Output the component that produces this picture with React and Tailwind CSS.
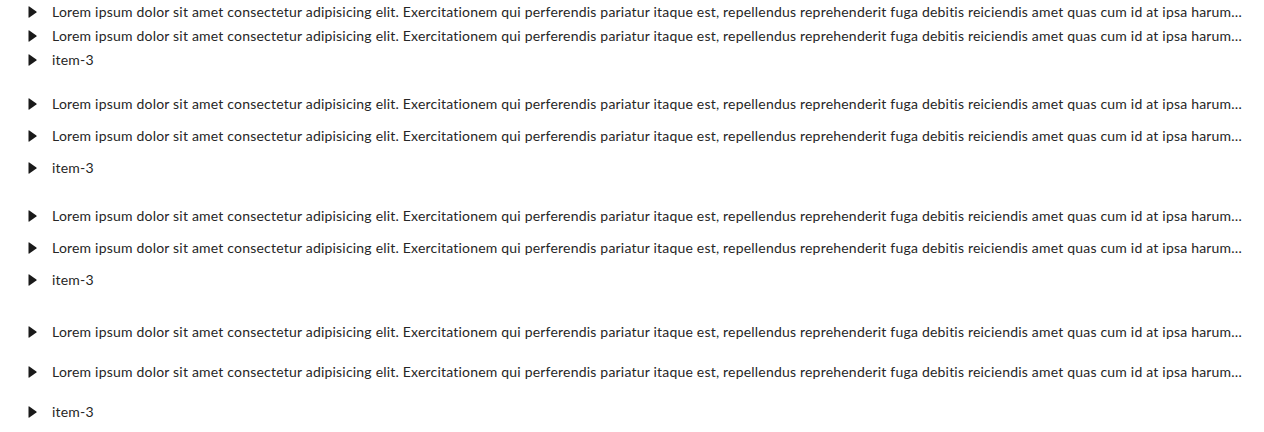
import React from "react";

const LONG =
  "Lorem ipsum dolor sit amet consectetur adipisicing elit. Exercitationem qui perferendis pariatur itaque est, repellendus reprehenderit fuga debitis reiciendis amet quas cum id at ipsa harum\u2003magnam voluptatibus.";

function Caret() {
  return (
    <svg width="9" height="12" viewBox="0 0 9 12" className="shrink-0 ml-[28px]">
      <path d="M0.5 0.9 Q0.5 0 1.3 0.5 L8.4 5.4 Q9 6 8.4 6.6 L1.3 11.5 Q0.5 12 0.5 11.1 Z" fill="#1a1a1a" />
    </svg>
  );
}

const textCls =
  "ml-[15px] min-w-0 flex-1 truncate text-[14px] leading-[20px] tracking-[0.2px] text-[#262626] [font-variant-ligatures:none]";

export default function App() {
  return (
    <div
      className="flex flex-col gap-4 pr-[18px] bg-white"
      style={{ fontFamily: "Lato, 'Noto Sans', sans-serif" }}
    >
      <div className="flex flex-col">
        <div className="flex items-center h-6">
          <Caret />
          <span className={textCls}>{LONG}</span>
        </div>
        <div className="flex items-center h-6">
          <Caret />
          <span className={textCls}>{LONG}</span>
        </div>
        <div className="flex items-center h-6">
          <Caret />
          <span className={textCls}>item-3</span>
        </div>
      </div>
      <div className="flex flex-col">
        <div className="flex items-center h-8">
          <Caret />
          <span className={textCls}>{LONG}</span>
        </div>
        <div className="flex items-center h-8">
          <Caret />
          <span className={textCls}>{LONG}</span>
        </div>
        <div className="flex items-center h-8">
          <Caret />
          <span className={textCls}>item-3</span>
        </div>
      </div>
      <div className="flex flex-col">
        <div className="flex items-center h-8">
          <Caret />
          <span className={textCls}>{LONG}</span>
        </div>
        <div className="flex items-center h-8">
          <Caret />
          <span className={textCls}>{LONG}</span>
        </div>
        <div className="flex items-center h-8">
          <Caret />
          <span className={textCls}>item-3</span>
        </div>
      </div>
      <div className="flex flex-col">
        <div className="flex items-center h-10">
          <Caret />
          <span className={textCls}>{LONG}</span>
        </div>
        <div className="flex items-center h-10">
          <Caret />
          <span className={textCls}>{LONG}</span>
        </div>
        <div className="flex items-center h-10">
          <Caret />
          <span className={textCls}>item-3</span>
        </div>
      </div>
    </div>
  );
}
